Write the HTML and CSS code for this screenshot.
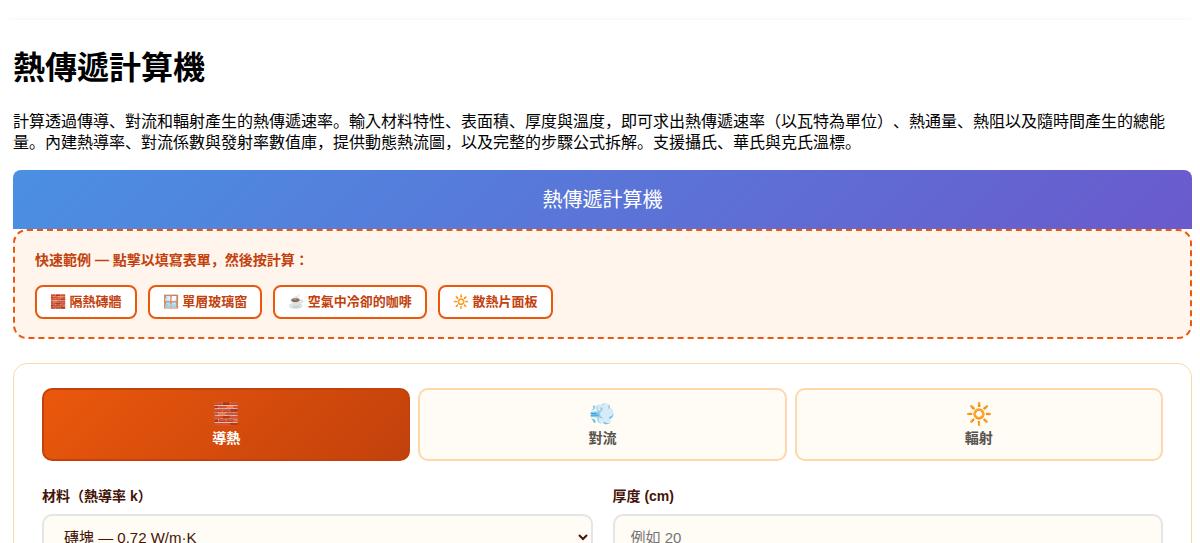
FILE: index.html
```html
<!DOCTYPE html>
<html lang="en">
<head>
  <meta charset="UTF-8">
  <meta name="viewport" content="width=device-width, initial-scale=1.0">
  <title>熱傳遞計算機</title>
  <link rel="stylesheet" href="styles.css">
</head>
<body>
  <main class="container">
    <h1>熱傳遞計算機</h1>
    <p class="intro">計算透過傳導、對流和輻射產生的熱傳遞速率。輸入材料特性、表面積、厚度與溫度，即可求出熱傳遞速率（以瓦特為單位）、熱通量、熱阻以及隨時間產生的總能量。內建熱導率、對流係數與發射率數值庫，提供動態熱流圖，以及完整的步驟公式拆解。支援攝氏、華氏與克氏溫標。</p>

    <div class="calc-header">熱傳遞計算機</div>

    <section class="examples">
      <div class="examples-title">快速範例 — 點擊以填寫表單，然後按計算：</div>
      <div class="examples-list">
        <button type="button" class="example-btn">🧱 隔熱磚牆</button>
        <button type="button" class="example-btn">🪟 單層玻璃窗</button>
        <button type="button" class="example-btn">☕ 空氣中冷卻的咖啡</button>
        <button type="button" class="example-btn">🔆 散熱片面板</button>
      </div>
    </section>

    <form class="card">
      <div class="tabs">
        <button type="button" class="tab active"><span class="tab-icon">🧱</span>導熱</button>
        <button type="button" class="tab"><span class="tab-icon">💨</span>對流</button>
        <button type="button" class="tab"><span class="tab-icon">🔆</span>輻射</button>
      </div>

      <div class="form-grid">
        <div class="field">
          <label for="material">材料（熱導率 k）</label>
          <select id="material">
            <option value="0.72">磚塊 — 0.72 W/m·K</option>
          </select>
        </div>
        <div class="field">
          <label for="thickness">厚度 (cm)</label>
          <input type="number" id="thickness" placeholder="例如 20">
        </div>
      </div>
    </form>
  </main>

  <script>
    const tabs = document.querySelectorAll(".tab");

    tabs.forEach(tab => {
      tab.addEventListener("click", () => {
        tabs.forEach(t => t.classList.remove("active"));
        tab.classList.add("active");
      });
    });
  </script>
</body>
</html>
```

FILE: styles.css
```css
* {
  box-sizing: border-box;
}
body {
  margin: 0 8px;
  padding: 20px 0;
  font-family: "Liberation Sans", Arial, "Noto Sans CJK JP", sans-serif;
  text-spacing-trim: space-all;
  color: #000;
  background: #fff;
}
.container {
  padding: 5px 0 80px 5px;
  background: #fff;
  box-shadow: 0 4px 8px rgba(0, 0, 0, 0.2);
}
h1 {
  margin: 21px 0;
  font-size: 32px;
  line-height: 44px;
}
.intro {
  margin: 0 0 17px;
  line-height: 21px;
}
.calc-header {
  padding: 17px 16px 15px;
  font-size: 20px;
  line-height: 27px;
  text-align: center;
  color: #fff;
  background: linear-gradient(135deg, #4a90e2, #6a5acd);
  border-radius: 8px 8px 0 0;
}

/* Quick examples */
.examples {
  margin-bottom: 24px;
  padding: 18px 20px;
  background: #fff5ec;
  border: 2px dashed #ea580c;
  border-radius: 14px;
}
.examples-title {
  margin-bottom: 14px;
  font-size: 14px;
  line-height: 22px;
  font-weight: bold;
  color: #c2410c;
}
.examples-list {
  display: flex;
  flex-wrap: wrap;
  gap: 11px;
}
.example-btn {
  padding: 6px 13px;
  font-family: inherit;
  font-size: 13px;
  line-height: 18px;
  font-weight: bold;
  color: #c2410c;
  background: #fff;
  border: 2px solid #ea580c;
  border-radius: 8px;
  cursor: pointer;
}
.example-btn:hover {
  color: #fff;
  background: #ea580c;
}

/* Calculator form */
.card {
  padding: 24px 28px;
  background: #fff;
  border: 1px solid #fed7aa;
  border-radius: 14px;
}
.tabs {
  display: grid;
  grid-template-columns: repeat(3, 1fr);
  gap: 8px;
  margin-bottom: 24px;
}
.tab {
  padding: 9px 8px 11px;
  font-family: inherit;
  font-size: 14px;
  line-height: 20px;
  font-weight: bold;
  text-align: center;
  color: #57534e;
  background: #fffbf5;
  border: 2px solid #fed7aa;
  border-radius: 10px;
  cursor: pointer;
}
.tab.active {
  color: #fff;
  background: linear-gradient(135deg, #ea580c, #c2410c);
  border-color: #c2410c;
}
.tab-icon {
  display: block;
  font-size: 21px;
  line-height: 29px;
}
.form-grid {
  display: grid;
  grid-template-columns: repeat(2, 1fr);
  gap: 20px;
}
.field {
  display: flex;
  flex-direction: column;
  gap: 6px;
}
.field label {
  font-size: 14px;
  line-height: 23px;
  font-weight: bold;
  color: #431407;
}
.field select,
.field input {
  width: 100%;
  height: 46px;
  padding: 10px 16px;
  font-family: inherit;
  font-size: 15px;
  color: #431407;
  background: #fffbf5;
  border: 2px solid #e5e5e5;
  border-radius: 10px;
}
.field select:focus,
.field input:focus {
  outline: none;
  border-color: #ea580c;
}
@media (max-width: 600px) {
  .form-grid {
    grid-template-columns: 1fr;
  }
  .card {
    padding: 16px;
  }
}
```
